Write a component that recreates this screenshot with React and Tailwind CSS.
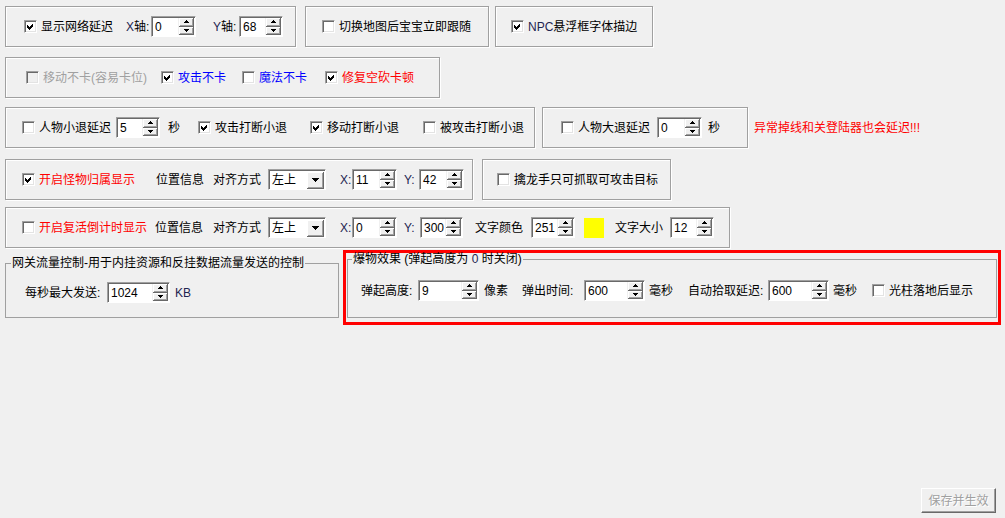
import React from 'react';

// pixel-style arrows for the spin buttons and drop-downs
const Tri = ({ up, big }) => {
  const rows = big ? [[0, 7], [1, 5], [2, 3], [3, 1]] : [[0, 5], [1, 3], [2, 1]];
  const w = big ? 7 : 5;
  const h = rows.length;
  return (
    <svg width={w} height={h} viewBox={`0 0 ${w} ${h}`} className="block" shapeRendering="crispEdges">
      {rows.map(([i, len]) => (
        <rect key={i} x={(w - len) / 2} y={up ? h - 1 - i : i} width={len} height="1" fill="#000" />
      ))}
    </svg>
  );
};

const Check = ({ checked, disabled }) => (
  <span
    className={`relative block w-[13px] h-[13px] shrink-0 border border-t-[#a0a0a0] border-l-[#a0a0a0] border-r-white border-b-white shadow-[inset_1px_1px_0_#696969,inset_-1px_-1px_0_#e3e3e3] ${
      disabled ? 'bg-[#f0f0f0]' : 'bg-white'
    }`}
  >
    {checked && (
      <svg className="absolute left-[2px] top-[2px]" width="7" height="7" viewBox="0 0 7 7" shapeRendering="crispEdges">
        <polygon points="0,2 2,4 6,0 6,3 2,7 0,5" fill="#000" />
      </svg>
    )}
  </span>
);

const Opt = ({ checked, disabled, color = 'text-black', className = '', children }) => (
  <span className={`flex items-center shrink-0 ${className}`}>
    <Check checked={checked} disabled={disabled} />
    <span className={`ml-[4px] whitespace-nowrap ${color}`}>{children}</span>
  </span>
);

const SpinBtn = ({ up }) => (
  <span className="flex flex-1 items-center justify-center bg-[#f0f0f0] border-r border-b border-r-[#696969] border-b-[#696969] shadow-[inset_1px_1px_0_#fff,inset_-1px_-1px_0_#a0a0a0]">
    <Tri up={up} />
  </span>
);

const Spin = ({ value, className = 'w-[44px]' }) => (
  <span className={`flex shrink-0 h-[21px] border border-t-[#a0a0a0] border-l-[#a0a0a0] border-r-white border-b-white ${className}`}>
    <span className="flex flex-1 min-w-0 bg-white shadow-[inset_1px_1px_0_#696969]">
      <span className="flex flex-1 items-center pl-[3px] pt-[1px]">{value}</span>
      <span className="flex flex-col w-[16px] mt-[1px] mr-[1px] mb-[1px] border-l border-l-[#f0f0f0]">
        <SpinBtn up />
        <SpinBtn />
      </span>
    </span>
  </span>
);

const Select = ({ value, className = '' }) => (
  <span className={`flex shrink-0 w-[58px] h-[21px] border border-t-[#a0a0a0] border-l-[#a0a0a0] border-r-white border-b-white ${className}`}>
    <span className="flex flex-1 items-center bg-white shadow-[inset_1px_1px_0_#696969]">
      <span className="flex-1 pl-[3px] pt-[1px]">{value}</span>
      <span className="flex items-center justify-center w-[17px] h-[17px] mr-[1px] mt-[1px] bg-[#f0f0f0] border-r border-b border-r-[#696969] border-b-[#696969] shadow-[inset_1px_1px_0_#fff,inset_-1px_-1px_0_#a0a0a0]">
        <Tri big />
      </span>
    </span>
  </span>
);

const Panel = ({ className = '', children }) => (
  <div className={`flex items-center shrink-0 h-[41px] border border-[#a0a0a0] shadow-[inset_1px_1px_0_#fff,1px_1px_0_#fff] ${className}`}>
    {children}
  </div>
);

const Txt = ({ className = '', children }) => (
  <span className={`shrink-0 whitespace-nowrap ${className}`}>{children}</span>
);

const Lat = ({ children }) => <span className="text-[#1e2550]">{children}</span>;

const App = () => {
  return (
    <div className="flex flex-col w-[1005px] h-[518px] bg-[#f0f0f0] text-black text-[12px] leading-[14px] font-['Liberation_Sans','Noto_Sans_CJK_SC',sans-serif] overflow-hidden">
      {/* row 1 */}
      <div className="flex mt-[6px] ml-[5px]">
        <Panel className="w-[291px] pl-[18px]">
          <Opt checked>显示网络延迟</Opt>
          <Txt className="ml-[13px] w-[25px]">
            <Lat>X</Lat>轴:
          </Txt>
          <Spin value="0" className="w-[45px]" />
          <Txt className="ml-[17px] w-[26px]">
            <Lat>Y</Lat>轴:
          </Txt>
          <Spin value="68" className="w-[44px]" />
        </Panel>
        <Panel className="w-[184px] ml-[9px] pl-[16px]">
          <Opt>切换地图后宝宝立即跟随</Opt>
        </Panel>
        <Panel className="w-[158px] ml-[6px] pl-[15px]">
          <Opt checked>
            <Lat>NPC</Lat>悬浮框字体描边
          </Opt>
        </Panel>
      </div>

      {/* row 2 */}
      <div className="flex mt-[10px] ml-[5px]">
        <Panel className="w-[435px] pl-[20px]">
          <Opt disabled color="text-[#a0a0a0]" className="w-[135px]">
            移动不卡(容易卡位)
          </Opt>
          <Opt checked color="text-[#0000ff]" className="w-[81px]">
            攻击不卡
          </Opt>
          <Opt color="text-[#0000ff]" className="w-[83px]">
            魔法不卡
          </Opt>
          <Opt checked color="text-[#ff0000]">
            修复空砍卡顿
          </Opt>
        </Panel>
      </div>

      {/* row 3 */}
      <div className="flex items-center mt-[9px] ml-[5px]">
        <Panel className="w-[530px] pl-[16px]">
          <Opt className="w-[94px]">人物小退延迟</Opt>
          <Spin value="5" />
          <Txt className="ml-[8px] w-[30px]">秒</Txt>
          <Opt checked className="w-[112px]">
            攻击打断小退
          </Opt>
          <Opt checked className="w-[113px]">
            移动打断小退
          </Opt>
          <Opt>被攻击打断小退</Opt>
        </Panel>
        <Panel className="w-[206px] ml-[7px] pl-[18px]">
          <Opt className="w-[96px]">人物大退延迟</Opt>
          <Spin value="0" className="w-[45px]" />
          <Txt className="ml-[6px]">秒</Txt>
        </Panel>
        <Txt className="ml-[6px] text-[#ff0000]">异常掉线和关登陆器也会延迟!!!</Txt>
      </div>

      {/* row 4 */}
      <div className="flex mt-[11px] ml-[5px]">
        <Panel className="w-[468px] pl-[16px]">
          <Opt checked color="text-[#ff0000]" className="w-[134px]">
            开启怪物归属显示
          </Opt>
          <Txt className="w-[57px]">位置信息</Txt>
          <Txt className="w-[55px]">对齐方式</Txt>
          <Select value="左上" />
          <Txt className="ml-[14px] w-[12px]">
            <Lat>X:</Lat>
          </Txt>
          <Spin value="11" className="w-[45px]" />
          <Txt className="ml-[7px] w-[15px]">
            <Lat>Y:</Lat>
          </Txt>
          <Spin value="42" className="w-[45px]" />
        </Panel>
        <Panel className="w-[189px] ml-[9px] pl-[14px]">
          <Opt>擒龙手只可抓取可攻击目标</Opt>
        </Panel>
      </div>

      {/* row 5 */}
      <div className="flex mt-[7px] ml-[5px]">
        <Panel className="w-[725px] pl-[16px]">
          <Opt color="text-[#ff0000]" className="w-[133px]">
            开启复活倒计时显示
          </Opt>
          <Txt className="w-[58px]">位置信息</Txt>
          <Txt className="w-[55px]">对齐方式</Txt>
          <Select value="左上" />
          <Txt className="ml-[14px] w-[12px]">
            <Lat>X:</Lat>
          </Txt>
          <Spin value="0" className="w-[45px]" />
          <Txt className="ml-[7px] w-[16px]">
            <Lat>Y:</Lat>
          </Txt>
          <Spin value="300" className="w-[43px]" />
          <Txt className="ml-[12px] w-[56px]">文字颜色</Txt>
          <Spin value="251" className="w-[44px]" />
          <span className="shrink-0 ml-[9px] w-[20px] h-[20px] bg-[#ffff00]" />
          <Txt className="ml-[11px] w-[55px]">文字大小</Txt>
          <Spin value="12" className="w-[44px]" />
        </Panel>
      </div>

      {/* row 6: group boxes */}
      <div className="flex items-start ml-[5px]">
        <fieldset className="w-[334px] h-[62px] mt-[8px] border border-[#a0a0a0]">
          <legend className="ml-[5px] px-[1px] leading-[14px]">网关流量控制-用于内挂资源和反挂数据流量发送的控制</legend>
          <div className="flex items-center h-[21px] mt-[12px] pl-[19px]">
            <Txt className="w-[82px]">每秒最大发送:</Txt>
            <Spin value="1024" className="w-[63px]" />
            <Txt className="ml-[5px]">
              <Lat>KB</Lat>
            </Txt>
          </div>
        </fieldset>

        <div className="w-[658px] h-[75px] mt-[2px] ml-[4px] border-[3px] border-[#ff0000]">
          <fieldset className="w-[650px] h-[65px] ml-[1px] border border-[#a0a0a0]">
            <legend className="ml-[4px] px-[1px] leading-[12px]">
              爆物效果 (弹起高度为 <Lat>0</Lat> 时关闭)
            </legend>
            <div className="flex items-center h-[21px] mt-[15px] pl-[13px]">
              <Txt className="w-[57px]">弹起高度:</Txt>
              <Spin value="9" className="w-[61px]" />
              <Txt className="ml-[5px] w-[38px]">像素</Txt>
              <Txt className="w-[62px]">弹出时间:</Txt>
              <Spin value="600" className="w-[61px]" />
              <Txt className="ml-[4px] w-[39px]">毫秒</Txt>
              <Txt className="w-[80px]">自动拾取延迟:</Txt>
              <Spin value="600" className="w-[61px]" />
              <Txt className="ml-[4px] w-[39px]">毫秒</Txt>
              <Opt>光柱落地后显示</Opt>
            </div>
          </fieldset>
        </div>
      </div>

      {/* save button */}
      <div className="flex justify-end mt-auto mb-[5px] mr-[9px]">
        <button
          disabled
          className="w-[75px] h-[25px] bg-[#f0f0f0] border border-t-white border-l-white border-r-[#696969] border-b-[#696969] shadow-[inset_-1px_-1px_0_#a0a0a0] text-[#a0a0a0] [text-shadow:1px_1px_0_#fff]"
        >
          保存并生效
        </button>
      </div>
    </div>
  );
};

export default App;
